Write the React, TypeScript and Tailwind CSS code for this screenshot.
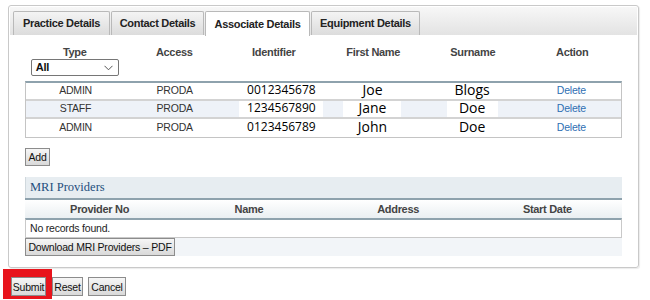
import React from "react";

const btn =
  "box-border h-[18px] px-0 flex items-center justify-center border border-[#8c8c8c] bg-gradient-to-b from-[#f6f6f6] to-[#d9d9d9] text-[10.5px] leading-[12px] text-[#111] font-['Liberation_Sans',Arial,sans-serif] tracking-[-0.2px] whitespace-nowrap";

const tabBase =
  "box-border h-[24px] border border-b-0 border-[#b9b9b9] rounded-t-[2px] flex items-center justify-center text-[11px] font-bold text-[#222] tracking-[-0.3px]";

const rows = [
  { type: "ADMIN", access: "PRODA", id: "0012345678", first: "Joe", last: "Blogs", alt: false },
  { type: "STAFF", access: "PRODA", id: "1234567890", first: "Jane", last: "Doe", alt: true },
  { type: "ADMIN", access: "PRODA", id: "0123456789", first: "John", last: "Doe", alt: false },
];

export default function App() {
  return (
    <div className="w-[650px] h-[300px] bg-white relative overflow-hidden font-['Liberation_Sans',Arial,sans-serif]">
      <div className="pt-[5px] pl-[8px]">
        <div className="box-border w-[631px] h-[263px] border border-[#c9c9c9] rounded-[3px] p-[1px] shadow-[1px_1px_1px_rgba(0,0,0,0.08)]">
          {/* tab strip */}
          <div className="h-[28px] bg-gradient-to-b from-[#f7f7f7] to-[#e3e3e3] flex items-end pl-[3px] gap-[1px]">
            <div className={`${tabBase} w-[97px] bg-gradient-to-b from-[#f4f4f4] to-[#dcdcdc]`}>Practice Details</div>
            <div className={`${tabBase} w-[93px] bg-gradient-to-b from-[#f4f4f4] to-[#dcdcdc]`}>Contact Details</div>
            <div className={`${tabBase} w-[105px] h-[25px] bg-white -mb-[1px]`}>Associate Details</div>
            <div className={`${tabBase} w-[109px] bg-gradient-to-b from-[#f4f4f4] to-[#dcdcdc]`}>Equipment Details</div>
          </div>

          <div className="pl-[15px] pt-[11px]">
            {/* header */}
            <div className="grid grid-cols-6 w-[597px] text-[11px] font-bold text-[#444] tracking-[-0.3px] leading-[13px]">
              <div className="flex flex-col items-center">
                <span>Type</span>
                <div className="box-border w-[88px] h-[17px] border border-[#767676] rounded-[2px] bg-white flex items-center justify-between pl-[4px] pr-[5px] text-[#111]">
                  <span>All</span>
                  <svg width="9" height="6" viewBox="0 0 9 6" fill="none">
                    <path d="M0.5 0.8 L4.5 4.8 L8.5 0.8" stroke="#555" strokeWidth="1" />
                  </svg>
                </div>
              </div>
              <div className="text-center">Access</div>
              <div className="text-center">Identifier</div>
              <div className="text-center">First Name</div>
              <div className="text-center">Surname</div>
              <div className="text-center">Action</div>
            </div>

            {/* table */}
            <div className="box-border mt-[5px] w-[597px] border-t-2 border-t-[#8ea2ad] border-x border-x-[#c4c4c4] border-b border-b-[#c4c4c4]">
              {rows.map((r, i) => (
                <div
                  key={i}
                  className={`box-border grid grid-cols-6 h-[18px] items-stretch ${i < 2 ? "border-b-2 border-b-[#d3d3d3]" : ""} ${r.alt ? "bg-[#eef2f8]" : "bg-white"}`}
                >
                  <div className="flex items-center justify-center text-[10.5px] text-[#333] tracking-[-0.2px]">{r.type}</div>
                  <div className="flex items-center justify-center text-[10.5px] text-[#333] tracking-[-0.2px]">{r.access}</div>
                  <div className="flex items-stretch pl-[15px]">
                    <div className={`w-[86px] flex items-center justify-center text-[12px] leading-[14px] text-black font-['Open_Sans',sans-serif] ${r.alt ? "bg-white" : ""}`}>
                      <span className="-mt-[2px]">{r.id}</span>
                    </div>
                  </div>
                  <div className="flex items-stretch pl-[20px]">
                    <div className={`w-[58px] flex items-center justify-center text-[14px] leading-[16px] text-black font-['Open_Sans',sans-serif] ${r.alt ? "bg-white" : ""}`}>
                      <span className="-mt-[2px]">{r.first}</span>
                    </div>
                  </div>
                  <div className="flex items-stretch pl-[24px]">
                    <div className={`w-[51px] flex items-center justify-center text-[14px] leading-[16px] text-black font-['Open_Sans',sans-serif] ${r.alt ? "bg-white" : ""}`}>
                      <span className="-mt-[3px]">{r.last}</span>
                    </div>
                  </div>
                  <div className="flex items-center justify-center text-[10.5px] text-[#2f6fb3] tracking-[-0.2px]">Delete</div>
                </div>
              ))}
            </div>

            <div className="mt-[10px]">
              <button className={`${btn} w-[25px]`}>Add</button>
            </div>

            {/* MRI providers */}
            <div className="mt-[11px] w-[597px]">
              <div className="h-[21px] bg-[#e7edf1] flex items-center pl-[4px] text-[12.5px] text-[#1f4f7d] font-['Liberation_Serif',serif] border-l border-l-[#d0d8dd]">
                MRI Providers
              </div>
              <div className="box-border border-t-2 border-t-[#8ea2ad] grid grid-cols-4 h-[20px] bg-gradient-to-b from-white to-[#eaeff2] text-[11px] font-bold text-[#444] tracking-[-0.3px] items-center">
                <div className="text-center">Provider No</div>
                <div className="text-center">Name</div>
                <div className="text-center">Address</div>
                <div className="text-center">Start Date</div>
              </div>
              <div className="box-border h-[20px] border-x border-b border-t-2 border-[#c9c9c9] border-t-[#8ea2ad] flex items-center pl-[4px] text-[10.5px] text-[#222] tracking-[-0.2px]">
                No records found.
              </div>
              <div className="h-[18px] bg-[#f2f5f8] flex items-start">
                <button className={`${btn} w-[150px]`}>Download MRI Providers – PDF</button>
              </div>
            </div>
          </div>
        </div>
      </div>

      {/* bottom buttons */}
      <div className="flex items-start mt-[1px]">
        <div className="ml-[3px] w-[49px] h-[30px] bg-[#e8141c] pl-[8px] pt-[8px]">
          <button className={`${btn} w-[35px] h-[19px]`}>Submit</button>
        </div>
        <button className={`${btn} w-[31px] h-[19px] mt-[8px]`}>Reset</button>
        <button className={`${btn} w-[38px] h-[19px] mt-[8px] ml-[5px]`}>Cancel</button>
      </div>
    </div>
  );
}
